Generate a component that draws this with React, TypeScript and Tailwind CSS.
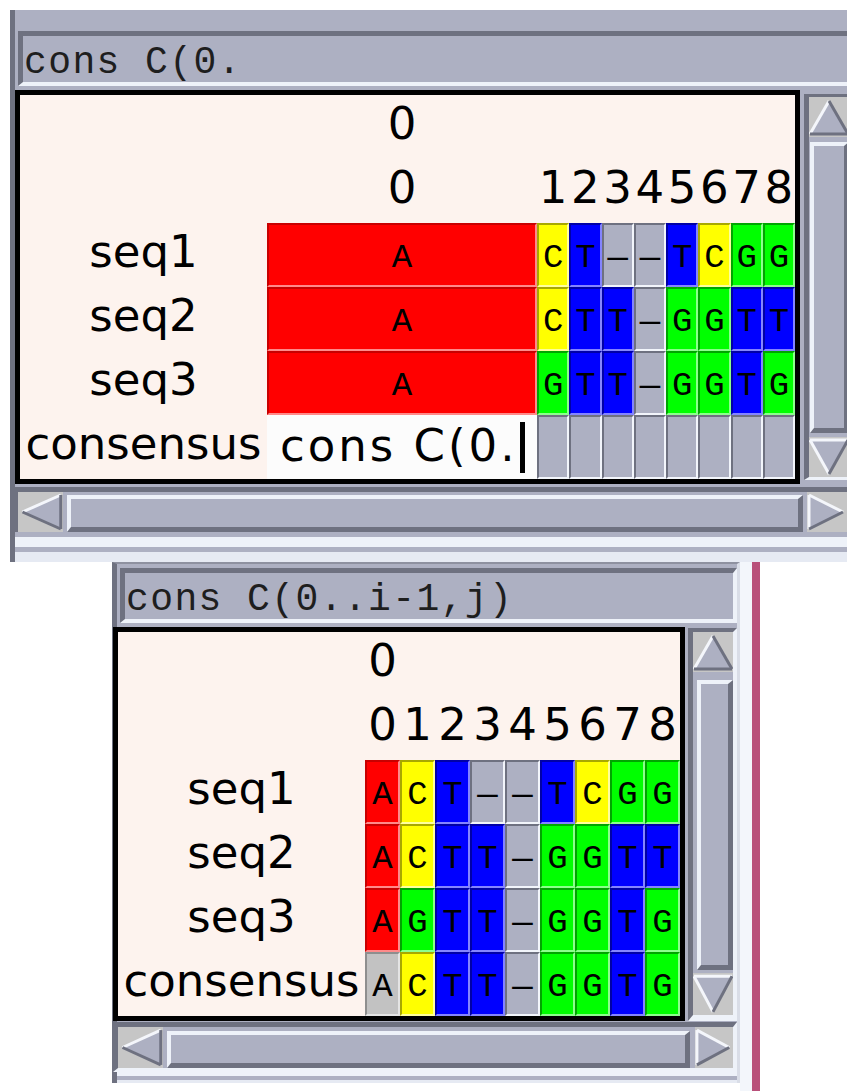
import React from "react";

type Tone = "red" | "yellow" | "blue" | "green" | "gap" | "grey";
type Dir = "up" | "down" | "left" | "right";

// bevelled colour cells of the alignment
const toneClass: Record<Tone, string> = {
  red: "bg-[#ff0000] border-t-[#c80000] border-l-[#c80000] border-b-[#ff8a8a] border-r-[#ff8a8a]",
  yellow: "bg-[#ffff00] border-t-[#a8a800] border-l-[#a8a800] border-b-[#ffff9c] border-r-[#ffff9c]",
  blue: "bg-[#0000ff] border-t-[#0000a6] border-l-[#0000a6] border-b-[#8484ff] border-r-[#8484ff]",
  green: "bg-[#00ff00] border-t-[#00a400] border-l-[#00a400] border-b-[#8cff8c] border-r-[#8cff8c]",
  gap: "bg-[#adb0c2] border-t-[#6e7180] border-l-[#6e7180] border-b-[#f2f5fb] border-r-[#f2f5fb]",
  grey: "bg-[#c2c2c2] border-t-[#8e8e8e] border-l-[#8e8e8e] border-b-[#e4e4e4] border-r-[#e4e4e4]",
};

const baseTone: Record<string, Tone> = { A: "red", C: "yellow", T: "blue", G: "green", "-": "gap" };

const Cell = ({ ch, tone }: { ch?: string; tone: Tone }) => (
  <div
    className={`flex items-center justify-center border-2 pt-[6px] font-['Liberation_Mono',monospace] text-[34px] leading-none text-black ${toneClass[tone]}`}
  >
    {ch === "-" ? "—" : ch}
  </div>
);

const Digit = ({ children }: { children?: React.ReactNode }) => (
  <div className="flex items-center justify-center pb-[7px] font-['DejaVu_Sans',sans-serif] text-[45px] leading-none text-black">
    {children}
  </div>
);

const Label = ({ children }: { children: React.ReactNode }) => (
  <div className="flex items-center justify-center pb-[7px] font-['DejaVu_Sans',sans-serif] text-[45px] leading-none text-black">
    {children}
  </div>
);

const TextField = ({ text, className }: { text: string; className: string }) => (
  <div
    className={`h-[55px] whitespace-pre border-t-[5px] border-l-[5px] border-b-[4px] border-r-[4px] border-t-[#6e7180] border-l-[#6e7180] border-b-[#eef2f9] border-r-[#eef2f9] bg-[#adb0c2] pl-[1px] pt-[8px] font-['Liberation_Mono',monospace] text-[38px] leading-none tracking-[1.4px] text-[#1e1e1e] ${className}`}
  >
    {text}
  </div>
);

const Thumb = ({ className }: { className: string }) => (
  <div
    className={`shrink-0 border-t-[4px] border-l-[4px] border-b-[5px] border-r-[5px] border-t-[#eef2f9] border-l-[#eef2f9] border-b-[#6e7180] border-r-[#6e7180] bg-[#adb0c2] ${className}`}
  />
);

const LIGHT = "#f4f6fb";
const DARK = "#6e7180";

const ArrowBox = ({ dir, className }: { dir: Dir; className: string }) => {
  const shapes: Record<Dir, { fill: string; light: string[]; dark: string[] }> = {
    up: { fill: "1,37 20,4 39,37", light: ["1,37 20,4"], dark: ["20,4 39,37", "1,37 39,37"] },
    down: { fill: "1,3 39,3 20,37", light: ["1,3 39,3", "1,3 20,37"], dark: ["39,3 20,37"] },
    left: { fill: "4,20 38,3 38,37", light: ["4,20 38,3"], dark: ["4,20 38,37", "38,3 38,37"] },
    right: { fill: "2,3 36,20 2,37", light: ["2,3 2,37", "2,3 36,20"], dark: ["2,37 36,20"] },
  };
  const s = shapes[dir];
  return (
    <div className={`shrink-0 bg-[#c6c6c6] ${className}`}>
      <svg viewBox="0 0 40 40" preserveAspectRatio="none" className="block h-full w-full">
        <polygon points={s.fill} fill="#adb0c2" />
        {s.light.map((p) => (
          <polyline key={p} points={p} fill="none" stroke={LIGHT} strokeWidth={3} vectorEffect="non-scaling-stroke" />
        ))}
        {s.dark.map((p) => (
          <polyline key={p} points={p} fill="none" stroke={DARK} strokeWidth={3} vectorEffect="non-scaling-stroke" />
        ))}
      </svg>
    </div>
  );
};

const TopCanvas = () => {
  const rows = [
    { name: "seq1", bases: "CT--TCGG" },
    { name: "seq2", bases: "CTT-GGTT" },
    { name: "seq3", bases: "GTT-GGTG" },
  ];
  return (
    <div className="h-[394px] w-[785px] shrink-0 border-[5px] border-black bg-[#fdf3ee]">
      <div className="grid grid-cols-[247px_270px_repeat(8,minmax(0,1fr))] grid-rows-[repeat(6,64px)]">
        <div />
        <Digit>0</Digit>
        <div className="col-span-8" />
        <div />
        <Digit>0</Digit>
        {"12345678".split("").map((d) => (
          <Digit key={d}>{d}</Digit>
        ))}
        {rows.map((r) => (
          <React.Fragment key={r.name}>
            <Label>{r.name}</Label>
            <Cell ch="A" tone="red" />
            {r.bases.split("").map((b, i) => (
              <Cell key={i} ch={b} tone={baseTone[b]} />
            ))}
          </React.Fragment>
        ))}
        <Label>consensus</Label>
        <div className="flex items-center whitespace-pre bg-[#fcfcfc] pl-[13px] font-['DejaVu_Sans',sans-serif] text-[45px] leading-none tracking-[3px] text-black">
          <span className="pb-[4px]">cons C(0.</span>
          <span className="ml-[3px] inline-block h-[51px] w-[5px] bg-black" />
        </div>
        {Array.from({ length: 8 }).map((_, i) => (
          <Cell key={i} tone="gap" />
        ))}
      </div>
    </div>
  );
};

const BottomCanvas = () => {
  const rows = [
    { name: "seq1", bases: "ACT--TCGG" },
    { name: "seq2", bases: "ACTT-GGTT" },
    { name: "seq3", bases: "AGTT-GGTG" },
  ];
  return (
    <div className="h-[394px] w-[572px] shrink-0 border-[5px] border-black bg-[#fdf3ee]">
      <div className="grid grid-cols-[247px_repeat(9,35px)] grid-rows-[repeat(6,64px)]">
        <div />
        <Digit>0</Digit>
        <div className="col-span-8" />
        <div />
        {"012345678".split("").map((d) => (
          <Digit key={d}>{d}</Digit>
        ))}
        {rows.map((r) => (
          <React.Fragment key={r.name}>
            <Label>{r.name}</Label>
            {r.bases.split("").map((b, i) => (
              <Cell key={i} ch={b} tone={baseTone[b]} />
            ))}
          </React.Fragment>
        ))}
        <Label>consensus</Label>
        {"ACTT-GGTG".split("").map((b, i) => (
          <Cell key={i} ch={b} tone={i === 0 ? "grey" : baseTone[b]} />
        ))}
      </div>
    </div>
  );
};

const TopPanel = () => (
  <div className="h-[552px] w-[845px] border-l-[5px] border-[#6e7180] bg-[#adb0c2] pt-[21px]">
    <TextField text="cons C(0." className="ml-[3px] w-[840px]" />

    <div className="mt-[4px] flex gap-[4px]">
      <TopCanvas />
      {/* vertical scrollbar */}
      <div className="mt-[4px] flex h-[386px] w-[49px] shrink-0 flex-col border-t-[3px] border-l-[5px] border-b-[3px] border-r-[4px] border-t-[#6e7180] border-l-[#6e7180] border-b-[#eef2f9] border-r-[#eef2f9]">
        <ArrowBox dir="up" className="h-[40px] w-[40px]" />
        <Thumb className="ml-[1px] mt-[5px] h-[291px] w-[39px]" />
        <ArrowBox dir="down" className="mt-[4px] h-[40px] w-[40px]" />
      </div>
    </div>

    {/* horizontal scrollbar */}
    <div className="mt-[3px] flex h-[45px] w-[840px] border-t-[5px] border-l-[3px] border-t-[#6e7180] border-l-[#6e7180]">
      <ArrowBox dir="left" className="h-[40px] w-[45px]" />
      <Thumb className="ml-[4px] mt-[3px] h-[37px] w-[736px]" />
      <ArrowBox dir="right" className="ml-[4px] h-[40px] w-[40px]" />
    </div>
    <div className="h-[5px]" />
    <div className="h-[10px] bg-[#eef2f9]" />
    <div className="h-[5px] bg-[#adb0c2]" />
    <div className="h-[10px] bg-[#e6eaf3]" />
  </div>
);

const BottomPanel = () => (
  <div className="h-[521px] w-[628px] shrink-0 self-start border-t-[2px] border-l-[5px] border-r-[3px] border-t-[#8e91a0] border-l-[#6e7180] border-r-[#d9dde7] bg-[#adb0c2] pt-[4px]">
    <TextField text="cons C(0..i-1,j)" className="ml-[3px] w-[617px]" />

    <div className="-ml-[4px] mt-[4px] flex gap-[3px]">
      <BottomCanvas />
      {/* vertical scrollbar */}
      <div className="mt-[1px] flex h-[393px] w-[49px] shrink-0 flex-col border-t-[4px] border-l-[5px] border-b-[6px] border-r-[4px] border-t-[#6e7180] border-l-[#6e7180] border-b-[#eef2f9] border-r-[#eef2f9]">
        <ArrowBox dir="up" className="h-[40px] w-[40px]" />
        <Thumb className="ml-[4px] mt-[8px] h-[290px] w-[36px]" />
        <ArrowBox dir="down" className="mt-[3px] h-[42px] w-[40px]" />
      </div>
    </div>

    {/* horizontal scrollbar */}
    <div className="-ml-[4px] mt-[1px] flex h-[50px] w-[624px] border-t-[5px] border-l-[5px] border-b-[4px] border-r-[4px] border-t-[#6e7180] border-l-[#6e7180] border-b-[#eef2f9] border-r-[#eef2f9]">
      <ArrowBox dir="left" className="h-[41px] w-[45px]" />
      <Thumb className="ml-[4px] mt-[4px] h-[37px] w-[523px]" />
      <ArrowBox dir="right" className="ml-[5px] h-[41px] w-[38px]" />
    </div>
    <div className="h-[4px] bg-[#eef2f9]" />
    <div className="h-[4px] bg-[#adb0c2]" />
    <div className="h-[3px] bg-[#e6eaf3]" />
  </div>
);

export default function App() {
  return (
    <div className="h-[1091px] w-[847px] overflow-hidden bg-white">
      <div className="pl-[10px] pt-[10px]">
        <TopPanel />
      </div>
      <div className="flex h-[529px] pl-[112px]">
        <BottomPanel />
        <div className="w-[12px] bg-[#f3f6fb]" />
        <div className="w-[8px] bg-[#b9507a]" />
      </div>
    </div>
  );
}
